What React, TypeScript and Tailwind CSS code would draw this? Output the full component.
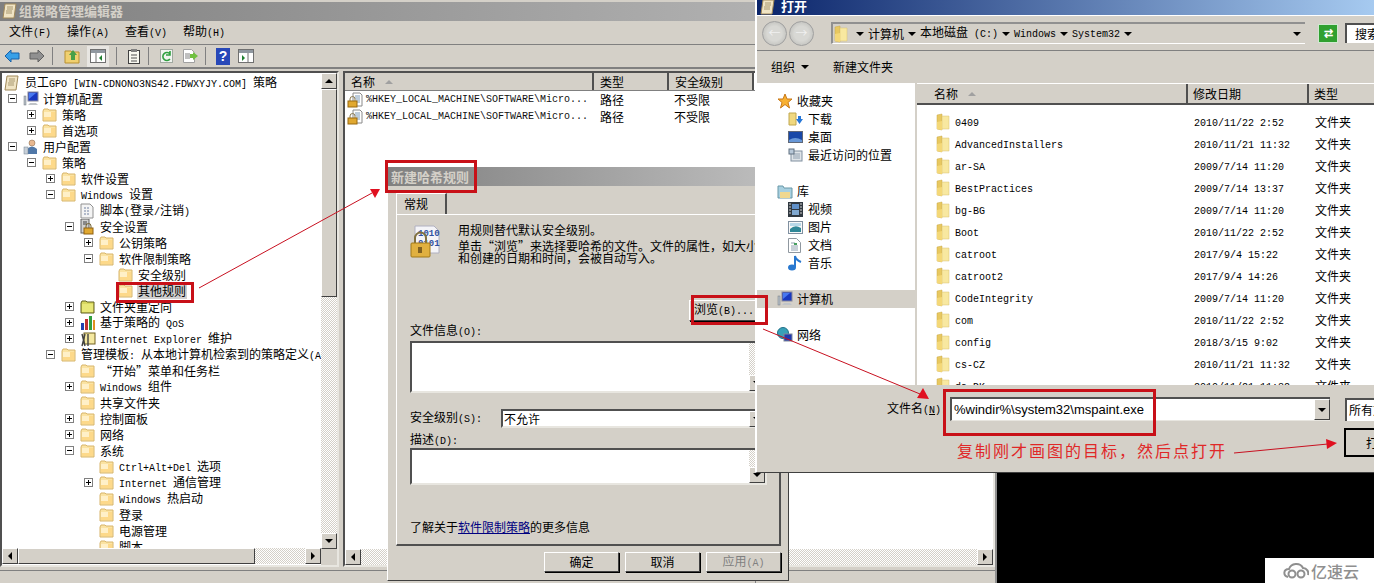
import type { ReactNode } from "react";

const RAISED = "border border-t-white border-l-white border-r-[#404040] border-b-[#404040] bg-[#d4d0c8]";
const SUNKEN = "border-2 border-t-[#505050] border-l-[#505050] border-r-[#e8e6e0] border-b-[#e8e6e0] bg-white";
const DITHER = "bg-[repeating-conic-gradient(#d4d0c8_0%_25%,#ffffff_0%_50%)] bg-[length:2px_2px]";

// SimSun look: ascii glyphs are 6px wide next to 12px hanzi
function Mixed({ text }: { text: string }) {
  const parts = text.split(/([\x20-\x7e]+)/).filter(Boolean);
  return (
    <span className="whitespace-pre font-['Noto_Sans_CJK_SC',sans-serif] text-[12px] leading-4">
      {parts.map((p, i) =>
        /^[\x20-\x7e]+$/.test(p) ? (
          <span key={i} className="font-['Liberation_Mono',monospace] text-[10px]">{p}</span>
        ) : (
          <span key={i}>{p}</span>
        ),
      )}
    </span>
  );
}

function FolderIcon({ className = "w-[15px] h-[14px]" }: { className?: string }) {
  return (
    <svg viewBox="0 0 15 14" className={`${className} shrink-0`}>
      <path d="M1 3 L1 13 L14 13 L14 2 L7 2 L6 1 L2 1 Z" fill="#fbe3a2" stroke="#d8b56a" />
      <path d="M2 4 L13 4 L13 12 L2 12 Z" fill="#fdd98a" />
      <path d="M2 4 L9 4 L9 9 L2 9 Z" fill="#fff0c8" />
    </svg>
  );
}

function OpenFolder() {
  return (
    <svg viewBox="0 0 14 18" className="h-[18px] w-[14px] shrink-0">
      <path d="M1 2 L6 1 L6 17 L1 16 Z" fill="#e8c860" stroke="#c8a848" strokeWidth="0.5" />
      <path d="M6 3 L13 3 L13 16 L6 16 Z" fill="#f8e8a0" stroke="#d8c070" strokeWidth="0.5" />
      <path d="M1 9 L6 8 L6 17 L1 16 Z" fill="#f4d878" />
    </svg>
  );
}

function Expander({ open }: { open: boolean }) {
  return (
    <span className="relative flex h-[9px] w-[9px] shrink-0 items-center justify-center border border-[#808080] bg-white">
      <span className="absolute h-px w-[5px] bg-black" />
      {!open && <span className="absolute h-[5px] w-px bg-black" />}
    </span>
  );
}

function LockDoc() {
  return (
    <svg viewBox="0 0 16 16" className="h-4 w-4 shrink-0">
      <path d="M6 1 L13 1 L15 3 L15 14 L6 14 Z" fill="#fff" stroke="#8a8a8a" />
      <path d="M8 4h5M8 6h5M9 8h4M10 10h3" stroke="#7a9ab8" />
      <path d="M3 9 V7 a2.5 2.5 0 0 1 5 0 V9" fill="none" stroke="#8a7a50" />
      <rect x="1" y="9" width="9" height="6" fill="#e0a830" stroke="#9a6a10" />
    </svg>
  );
}

function ComputerIcon() {
  return (
    <svg viewBox="0 0 16 16" className="h-4 w-4 shrink-0">
      <rect x="1" y="5" width="2" height="9" fill="#b8c0c8" stroke="#707880" strokeWidth="0.5" />
      <rect x="5" y="1" width="10" height="9" fill="#1838c0" stroke="#889" />
      <path d="M6 2 L13 2 L6 8 Z" fill="#4878f0" />
      <path d="M7 12 L13 12 L15 14 L5 14 Z" fill="#c0c4c8" />
    </svg>
  );
}

function UserIcon() {
  return (
    <svg viewBox="0 0 16 16" className="h-4 w-4 shrink-0">
      <circle cx="9" cy="4" r="3" fill="#e8b890" stroke="#806040" strokeWidth="0.5" />
      <path d="M4 15 L4 10 Q9 5 14 10 L14 15 Z" fill="#5078a8" />
      <rect x="1" y="8" width="4" height="7" fill="#c8d0d8" stroke="#708090" strokeWidth="0.5" />
    </svg>
  );
}

function ScriptIcon() {
  return (
    <svg viewBox="0 0 14 16" className="h-4 w-[14px] shrink-0">
      <path d="M1 1 L10 1 L13 4 L13 15 L1 15 Z" fill="#f4f4f4" stroke="#909090" />
      <path d="M4 5h6M4 8h6M4 11h6" stroke="#7080a0" strokeDasharray="2 1" />
    </svg>
  );
}

function SecurityIcon() {
  return (
    <svg viewBox="0 0 14 16" className="h-4 w-[14px] shrink-0">
      <rect x="1" y="0" width="8" height="14" fill="#d0d0d0" stroke="#606060" />
      <path d="M3 3h4M3 5h4" stroke="#404040" />
      <rect x="4" y="9" width="9" height="6" fill="#e0a830" stroke="#906010" />
      <path d="M6 9 V7 a2.5 2.5 0 0 1 5 0 V9" fill="none" stroke="#706030" />
    </svg>
  );
}

function RedirectIcon() {
  return (
    <svg viewBox="0 0 15 14" className="h-[14px] w-[15px] shrink-0">
      <path d="M1 3 L1 13 L14 13 L14 2 L7 2 L6 1 L2 1 Z" fill="#d8d860" stroke="#606020" />
      <path d="M2 4h11v8H2z" fill="#e8e878" />
    </svg>
  );
}

function QosIcon() {
  return (
    <svg viewBox="0 0 16 16" className="h-4 w-4 shrink-0">
      <rect x="1" y="8" width="3" height="7" fill="#2040b0" />
      <rect x="5" y="4" width="3" height="11" fill="#c03030" />
      <rect x="9" y="1" width="3" height="14" fill="#30a040" />
      <rect x="13" y="5" width="2" height="10" fill="#e09020" />
    </svg>
  );
}

function IeIcon() {
  return (
    <svg viewBox="0 0 16 16" className="h-4 w-4 shrink-0">
      <rect x="4" y="2" width="11" height="11" fill="#f4e8a0" stroke="#706020" />
      <path d="M2 3 L5 15 M5 3 L2 15 M8 3 V15" stroke="#404040" strokeWidth="1.4" />
    </svg>
  );
}

function GpoIcon() {
  return (
    <svg viewBox="0 0 15 17" className="h-[17px] w-[15px] shrink-0">
      <path d="M3 1 L14 1 L12 15 L1 15 Z" fill="#f0e4c4" stroke="#a08858" />
      <path d="M5 4h6M5 6h6M4 8h6M4 10h6" stroke="#a89870" />
    </svg>
  );
}

type TreeRow = { label: string; pad: number; exp?: "open" | "closed"; icon?: ReactNode; selected?: boolean };

// pad is the x of the icon inside the pane; the expander sits 15px in front of it
const TREE: TreeRow[] = [
  { label: "计算机配置", pad: 21, exp: "open", icon: <ComputerIcon /> },
  { label: "策略", pad: 40, exp: "closed" },
  { label: "首选项", pad: 40, exp: "closed" },
  { label: "用户配置", pad: 21, exp: "open", icon: <UserIcon /> },
  { label: "策略", pad: 40, exp: "open" },
  { label: "软件设置", pad: 59, exp: "closed" },
  { label: "Windows 设置", pad: 59, exp: "open" },
  { label: "脚本(登录/注销)", pad: 78, icon: <ScriptIcon /> },
  { label: "安全设置", pad: 78, exp: "open", icon: <SecurityIcon /> },
  { label: "公钥策略", pad: 97, exp: "closed" },
  { label: "软件限制策略", pad: 97, exp: "open" },
  { label: "安全级别", pad: 116 },
  { label: "其他规则", pad: 116, selected: true },
  { label: "文件夹重定向", pad: 78, exp: "closed", icon: <RedirectIcon /> },
  { label: "基于策略的 QoS", pad: 78, exp: "closed", icon: <QosIcon /> },
  { label: "Internet Explorer 维护", pad: 78, exp: "closed", icon: <IeIcon /> },
  { label: "管理模板: 从本地计算机检索到的策略定义(A", pad: 59, exp: "open" },
  { label: "“开始”菜单和任务栏", pad: 78 },
  { label: "Windows 组件", pad: 78, exp: "closed" },
  { label: "共享文件夹", pad: 78 },
  { label: "控制面板", pad: 78, exp: "closed" },
  { label: "网络", pad: 78, exp: "closed" },
  { label: "系统", pad: 78, exp: "open" },
  { label: "Ctrl+Alt+Del 选项", pad: 97 },
  { label: "Internet 通信管理", pad: 97, exp: "closed" },
  { label: "Windows 热启动", pad: 97 },
  { label: "登录", pad: 97 },
  { label: "电源管理", pad: 97 },
  { label: "脚本", pad: 97 },
];

function Tree() {
  return (
    <div className="h-[475px] overflow-hidden pt-[2px]">
      <div className="flex h-4 items-center gap-[6px] pl-[2px] text-black">
        <GpoIcon />
        <Mixed text="员工GPO [WIN-CDNONO3NS42.FDWXYJY.COM] 策略" />
      </div>
      {TREE.map((row, i) => (
        <div key={i} className="relative flex h-4 items-center" style={{ paddingLeft: row.pad }}>
          {row.exp && (
            <span className="absolute top-[3px]" style={{ left: row.pad - 15 }}>
              <Expander open={row.exp === "open"} />
            </span>
          )}
          <span className="flex w-4 shrink-0 items-center">{row.icon ?? <FolderIcon />}</span>
          <span className={`ml-[3px] whitespace-nowrap px-px text-black ${row.selected ? "bg-[#d0d0d0]" : ""}`}>
            <Mixed text={row.label} />
          </span>
        </div>
      ))}
    </div>
  );
}

function Arrow({ dir }: { dir: "up" | "down" | "left" | "right" }) {
  const cls =
    dir === "up"
      ? "border-x-[4px] border-b-[4px] border-x-transparent border-b-black"
      : dir === "down"
        ? "border-x-[4px] border-t-[4px] border-x-transparent border-t-black"
        : dir === "left"
          ? "border-y-[4px] border-r-[4px] border-y-transparent border-r-black"
          : "border-y-[4px] border-l-[4px] border-y-transparent border-l-black";
  return <span className={`block h-0 w-0 ${cls}`} />;
}

function ScrollBtn({ dir }: { dir: "up" | "down" | "left" | "right" }) {
  return (
    <span className={`${RAISED} flex h-4 w-4 shrink-0 items-center justify-center`}>
      <Arrow dir={dir} />
    </span>
  );
}

function MenuBar() {
  return (
    <div className="flex h-[24px] items-center gap-[16px] border-b border-b-[#808080] pl-[9px]">
      {["文件(F)", "操作(A)", "查看(V)", "帮助(H)"].map((m) => (
        <Mixed key={m} text={m} />
      ))}
    </div>
  );
}

function ToolSep() {
  return <span className="mx-[3px] h-[18px] w-px bg-[#808080]" />;
}

function ToolBar() {
  return (
    <div className="flex h-[24px] items-center gap-[4px] border-b-2 border-b-[#808080] pl-1">
      <svg viewBox="0 0 16 14" className="h-[14px] w-4">
        <path d="M1 7 L7 1 V4 H15 V10 H7 V13 Z" fill="#38a0e8" stroke="#1860a8" />
      </svg>
      <svg viewBox="0 0 16 14" className="ml-[5px] h-[14px] w-4">
        <path d="M15 7 L9 1 V4 H1 V10 H9 V13 Z" fill="#909090" stroke="#606060" />
      </svg>
      <ToolSep />
      <svg viewBox="0 0 16 16" className="ml-1 h-4 w-4">
        <path d="M1 3h6l1 1h7v11H1z" fill="#f0d070" stroke="#b89030" />
        <path d="M7 12 V7 H5 L9 2 L13 7 H11 V12 Z" fill="#48a048" />
      </svg>
      <span className="ml-[3px] flex h-[21px] w-[22px] items-center justify-center bg-[#e8e6e2]">
        <svg viewBox="0 0 16 14" className="h-[14px] w-4">
          <rect x="0.5" y="0.5" width="15" height="13" fill="#fff" stroke="#707070" />
          <rect x="1" y="1" width="14" height="3" fill="#9098a0" />
          <path d="M6 4v10" stroke="#707070" />
          <path d="M12 6 L9 9 L12 12 Z" fill="#208030" />
        </svg>
      </span>
      <ToolSep />
      <svg viewBox="0 0 14 16" className="ml-[3px] h-4 w-[14px]">
        <rect x="1.5" y="2.5" width="11" height="13" fill="#f8f8f0" stroke="#404040" />
        <rect x="4" y="1" width="6" height="3" fill="#808080" />
        <path d="M4 7h6M4 10h6M4 13h6" stroke="#505050" />
      </svg>
      <ToolSep />
      <svg viewBox="0 0 16 16" className="ml-[3px] h-4 w-4">
        <rect x="1.5" y="1.5" width="12" height="13" fill="#f0f4f0" stroke="#a0a8a0" />
        <path d="M11 6 A4 4 0 1 0 11 11 M11 3 V7 H7" fill="none" stroke="#30a040" strokeWidth="1.6" />
      </svg>
      <svg viewBox="0 0 16 16" className="ml-[3px] h-4 w-4">
        <path d="M1.5 1.5h8l3 3v10h-11z" fill="#fff" stroke="#a0a0a0" />
        <path d="M3 6h5M3 8h5M3 10h5" stroke="#808080" />
        <path d="M8 6h3V4l5 4-5 4v-2H8z" fill="#70c040" />
      </svg>
      <ToolSep />
      <span className="ml-[3px] flex h-[17px] w-[14px] items-center justify-center bg-[#2848b8] font-['Liberation_Sans',sans-serif] text-[14px] font-bold text-white">?</span>
      <svg viewBox="0 0 16 14" className="ml-[4px] h-[14px] w-4">
        <rect x="0.5" y="0.5" width="15" height="13" fill="#fff" stroke="#707070" />
        <rect x="1" y="1" width="14" height="3" fill="#9098a0" />
        <path d="M10 4v10" stroke="#707070" />
        <path d="M4 6 L7 9 L4 12 Z" fill="#208030" />
      </svg>
    </div>
  );
}

function TreePane() {
  return (
    <div className="flex h-[496px] w-[339px] shrink-0 border-2 border-t-[#505050] border-l-[#505050] border-r-[#e8e6e0] border-b-[#e8e6e0] bg-white">
      <div className="flex min-w-0 flex-1 flex-col">
        <Tree />
        <div className="flex h-4 bg-[#d4d0c8]">
          <ScrollBtn dir="left" />
          <span className={`${RAISED} w-[237px]`} />
          <span className={`flex-1 ${DITHER}`} />
          <ScrollBtn dir="right" />
        </div>
      </div>
      <div className="flex w-4 shrink-0 flex-col">
        <ScrollBtn dir="up" />
        <span className={`${RAISED} h-[208px] w-4`} />
        <span className={`flex-1 ${DITHER}`} />
        <ScrollBtn dir="down" />
        <span className="h-4 bg-[#d4d0c8]" />
      </div>
    </div>
  );
}

function ColumnHead({ label, className, sorted }: { label: string; className: string; sorted?: boolean }) {
  return (
    <div className={`flex h-[17px] items-center gap-[10px] border-r-2 border-r-[#505050] bg-[#d4d0c8] pl-[6px] ${className}`}>
      <Mixed text={label} />
      {sorted && <span className="block h-0 w-0 border-x-[4px] border-b-[4px] border-x-transparent border-b-[#a0a0a0]" />}
    </div>
  );
}

function RulesPane() {
  return (
    <div className="flex h-[496px] flex-1 flex-col border-2 border-t-[#505050] border-l-[#505050] border-r-[#e8e6e0] border-b-[#e8e6e0] bg-white">
      <div className="flex border-b border-b-[#808080]">
        <ColumnHead label="名称" className="w-[249px]" sorted />
        <ColumnHead label="类型" className="w-[75px]" />
        <ColumnHead label="安全级别" className="w-[85px]" />
      </div>
      <div className="flex-1 overflow-hidden">
        {[0, 1].map((i) => (
          <div key={i} className="flex h-[17px] items-center">
            <span className="ml-[2px] flex w-[19px]"><LockDoc /></span>
            <span className="w-[234px] font-['Liberation_Mono',monospace] text-[10px] text-[#101010]">
              %HKEY_LOCAL_MACHINE\SOFTWARE\Micro...
            </span>
            <span className="w-[74px]"><Mixed text="路径" /></span>
            <Mixed text="不受限" />
          </div>
        ))}
      </div>
      <div className="flex h-4 bg-[#d4d0c8]">
        <ScrollBtn dir="left" />
        <span className={`flex-1 ${DITHER}`} />
        <ScrollBtn dir="right" />
      </div>
    </div>
  );
}

function MainWindow() {
  return (
    <div className="absolute left-0 top-0 flex h-[583px] w-[997px] flex-col border-r-2 border-r-[#909090] bg-[#d4d0c8] pt-[2px]">
      <div className="flex h-[19px] items-center gap-[2px] bg-[linear-gradient(90deg,#808080,#c0c0c0)] pl-[2px]">
        <GpoIcon />
        <span className="-mt-[2px] font-['Noto_Sans_CJK_SC',sans-serif] text-[13px] font-bold text-[#d4d0c8]">组策略管理编辑器</span>
      </div>
      <MenuBar />
      <ToolBar />
      <div className="mt-[2px] flex flex-1 gap-1">
        <TreePane />
        <RulesPane />
      </div>
      <div className="flex h-[13px] items-stretch justify-end border-t border-t-[#808080]">
        <span className="w-[240px] border-l border-l-[#808080]" />
      </div>
    </div>
  );
}

function Btn({ children, className = "" }: { children: ReactNode; className?: string }) {
  return (
    <span className={`${RAISED} flex items-center justify-center shadow-[1px_1px_0_#000] ${className}`}>
      {children}
    </span>
  );
}

function MiniScroll({ className = "" }: { className?: string }) {
  return (
    <span className={`absolute right-0 flex w-[16px] flex-col bg-[#d4d0c8] ${className}`}>
      <span className={`flex-1 ${DITHER}`} />
      <ScrollBtn dir="down" />
    </span>
  );
}

function HashDialog() {
  return (
    <div className="absolute left-[387px] top-[165px] flex h-[416px] w-[402px] flex-col border-t-2 border-t-white border-r border-r-[#404040] border-b border-b-[#404040] border-l border-l-white bg-[#d4d0c8]">
      <div className="flex h-[19px] items-center bg-[linear-gradient(90deg,#808080,#c0c0c0)] pl-[3px]">
        <span className="font-['Noto_Sans_CJK_SC',sans-serif] text-[13px] font-bold leading-4 text-[#d4d0c8]">新建哈希规则</span>
      </div>
      {/* tab strip */}
      <div className="mx-2 mt-2 flex h-[21px] items-end border-b border-b-white">
        <span className="flex h-[21px] w-[51px] items-center border-t border-l border-r-2 border-t-white border-l-white border-r-[#505050] pl-[7px]">
          <Mixed text="常规" />
        </span>
      </div>
      <div className="mx-2 relative flex h-[331px] w-[385px] flex-col border-l border-l-white border-r-2 border-r-[#505050] border-b-2 border-b-[#505050] pl-[13px]">
        <div className="flex pt-[7px]">
          <svg viewBox="0 0 30 34" className="mt-[3px] h-[34px] w-[30px] shrink-0">
            <path d="M5 1 L24 1 L29 6 L29 28 L5 28 Z" fill="#f4f4f8" stroke="#b0b0c0" />
            <text x="8" y="11" fontFamily="Liberation Mono" fontSize="9" fontWeight="bold" fill="#3050a0">1010</text>
            <text x="8" y="21" fontFamily="Liberation Mono" fontSize="9" fontWeight="bold" fill="#3050a0">0101</text>
            <path d="M5 18 V13 a5.5 5.5 0 0 1 11 0 V18" fill="none" stroke="#807040" strokeWidth="2" />
            <rect x="1" y="18" width="19" height="14" rx="1" fill="#e0b040" stroke="#a07818" />
            <rect x="8" y="22" width="4" height="6" fill="#806020" />
          </svg>
          <div className="ml-[18px] flex flex-col whitespace-nowrap">
            <span className="h-4"><Mixed text="用规则替代默认安全级别。" /></span>
            <span className="h-[12px]"><Mixed text="单击“浏览”来选择要哈希的文件。文件的属性，如大小" /></span>
            <span className="h-[12px]"><Mixed text="和创建的日期和时间，会被自动写入。" /></span>
          </div>
        </div>
        <div className="mt-[38px] flex justify-end pr-[20px]">
          <Btn className="h-[21px] w-[70px]"><Mixed text="浏览(B)..." /></Btn>
        </div>
        <div className="mt-[1px] h-4"><Mixed text="文件信息(O):" /></div>
        <div className={`${SUNKEN} relative mt-[3px] h-[52px] w-[357px]`}>
          <MiniScroll className="top-0 h-full" />
        </div>
        <div className="mt-[16px] flex h-[19px] items-start">
          <span className="w-[91px]"><Mixed text="安全级别(S):" /></span>
          <span className={`${SUNKEN} relative flex h-[19px] w-[266px] items-center pl-[1px]`}>
            <Mixed text="不允许" />
            <MiniScroll className="top-0 h-full" />
          </span>
        </div>
        <div className="mt-[3px] h-4"><Mixed text="描述(D):" /></div>
        <div className={`${SUNKEN} relative mt-[1px] h-[37px] w-[357px]`}>
          <MiniScroll className="top-0 h-full" />
        </div>
        <div className="mt-[34px]">
          <Mixed text="了解关于" />
          <span className="text-[#000080] underline"><Mixed text="软件限制策略" /></span>
          <Mixed text="的更多信息" />
        </div>
      </div>
      <div className="mt-[6px] flex justify-end gap-[6px] pr-[7px]">
        <Btn className="h-5 w-[75px]"><Mixed text="确定" /></Btn>
        <Btn className="h-5 w-[75px]"><Mixed text="取消" /></Btn>
        <Btn className="h-5 w-[75px] text-[#808080]"><Mixed text="应用(A)" /></Btn>
      </div>
    </div>
  );
}

function NavItem({ icon, label, sub, active }: { icon: ReactNode; label: string; sub?: boolean; active?: boolean }) {
  return (
    <div className={`flex h-[18px] items-center ${active ? "bg-[#d4d0c8]" : ""} ${sub ? "pl-[31px]" : "pl-[20px]"}`}>
      <span className="flex w-[20px] shrink-0 items-center">{icon}</span>
      <span className="text-black"><Mixed text={label} /></span>
    </div>
  );
}

function NavPane() {
  return (
    <div className="flex w-[158px] shrink-0 flex-col bg-white pt-[9px]">
      <NavItem label="收藏夹" icon={
        <svg viewBox="0 0 16 16" className="h-4 w-4"><path d="M8 1 L10 6 L15 6 L11 9.5 L12.5 15 L8 11.5 L3.5 15 L5 9.5 L1 6 L6 6 Z" fill="#f8b030" stroke="#c87818" /></svg>
      } />
      <NavItem sub label="下载" icon={
        <svg viewBox="0 0 15 16" className="h-4 w-[15px]"><path d="M1 2h7v12H1z" fill="#f0d880" stroke="#c0a850" /><path d="M8 8h2V5h3v3h2l-3.5 5z" fill="#2878d8" /></svg>
      } />
      <NavItem sub label="桌面" icon={
        <svg viewBox="0 0 15 13" className="h-[13px] w-[15px]"><rect x="0.5" y="0.5" width="14" height="11" fill="#1848a8" stroke="#606878" /><path d="M1 9 Q7 5 14 9 V11 H1 Z" fill="#6898d8" /></svg>
      } />
      <NavItem sub label="最近访问的位置" icon={
        <svg viewBox="0 0 15 15" className="h-[15px] w-[15px]"><rect x="3" y="3" width="11" height="10" fill="#dfe4e8" stroke="#8090a0" /><path d="M5 6h7M5 8h7M5 10h7" stroke="#90a0b0" /><rect x="1" y="1" width="5" height="5" fill="#b8c8d8" stroke="#607080" /></svg>
      } />
      <div className="h-[18px]" />
      <NavItem label="库" icon={
        <svg viewBox="0 0 16 15" className="h-[15px] w-4"><path d="M1 2h5l1 2h8v10H1z" fill="#a8d0e0" stroke="#6898a8" /><path d="M3 8h10v6H3z" fill="#f0d890" /></svg>
      } />
      <NavItem sub label="视频" icon={
        <svg viewBox="0 0 15 15" className="h-[15px] w-[15px]"><rect width="15" height="15" fill="#303840" /><rect x="4" y="2" width="7" height="5" fill="#6090c8" /><rect x="4" y="8" width="7" height="5" fill="#80a8d0" /><path d="M1 2h2M1 5h2M1 8h2M1 11h2M12 2h2M12 5h2M12 8h2M12 11h2" stroke="#d0d0d0" /></svg>
      } />
      <NavItem sub label="图片" icon={
        <svg viewBox="0 0 15 13" className="h-[13px] w-[15px]"><rect x="0.5" y="0.5" width="14" height="12" fill="#f8f8f8" stroke="#8090a0" /><path d="M2 8 Q7 3 13 7 V11 H2 Z" fill="#308898" /><rect x="2" y="2" width="11" height="3" fill="#b8d8e8" /></svg>
      } />
      <NavItem sub label="文档" icon={
        <svg viewBox="0 0 13 15" className="h-[15px] w-[13px]"><path d="M0.5 0.5h8l4 4v10h-12z" fill="#fff" stroke="#9098a0" /><path d="M3 5h4M3 8h7M3 10h7M3 12h7" stroke="#90a0b0" /><rect x="6" y="5" width="3" height="2" fill="#48a060" /></svg>
      } />
      <NavItem sub label="音乐" icon={
        <svg viewBox="0 0 14 16" className="h-4 w-[14px]"><ellipse cx="4" cy="12.5" rx="4" ry="3" fill="#2878d0" /><path d="M7 12 V1 Q8 5 13 7" fill="none" stroke="#2878d0" strokeWidth="2" /></svg>
      } />
      <div className="h-[18px]" />
      <NavItem active label="计算机" icon={<ComputerIcon />} />
      <div className="h-[18px]" />
      <NavItem label="网络" icon={
        <svg viewBox="0 0 16 16" className="h-4 w-4"><circle cx="6" cy="6" r="5.5" fill="#38a0b8" stroke="#207088" /><rect x="7" y="7" width="8" height="7" fill="#2038b0" stroke="#808898" /></svg>
      } />
    </div>
  );
}

const FILES: [string, string][] = [
  ["0409", "2010/11/22 2:52"],
  ["AdvancedInstallers", "2010/11/21 11:32"],
  ["ar-SA", "2009/7/14 11:20"],
  ["BestPractices", "2009/7/14 13:37"],
  ["bg-BG", "2009/7/14 11:20"],
  ["Boot", "2010/11/22 2:52"],
  ["catroot", "2017/9/4 15:22"],
  ["catroot2", "2017/9/4 14:26"],
  ["CodeIntegrity", "2009/7/14 11:20"],
  ["com", "2010/11/22 2:52"],
  ["config", "2018/3/15 9:02"],
  ["cs-CZ", "2010/11/21 11:32"],
  ["da-DK", "2010/11/21 11:32"],
];

function FileList() {
  return (
    <div className="flex h-[302px] min-w-0 flex-1 flex-col overflow-hidden bg-white">
      <div className="flex h-[22px] shrink-0 items-center border-t border-t-white border-b-2 border-b-[#505050] bg-[#d4d0c8]">
        <span className="flex h-full w-[271px] items-center gap-[10px] border-r-2 border-r-[#505050] pl-[17px]">
          <Mixed text="名称" />
          <span className="block h-0 w-0 border-x-[4px] border-b-[4px] border-x-transparent border-b-[#a0a0a0]" />
        </span>
        <span className="flex h-full w-[121px] items-center border-r-2 border-r-[#505050] pl-[5px]">
          <Mixed text="修改日期" />
        </span>
        <span className="pl-[5px]"><Mixed text="类型" /></span>
      </div>
      <div className="pt-[6px]">
        {FILES.map(([name, date]) => (
          <div key={name} className="flex h-[22px] items-center">
            <span className="ml-[19px] flex w-[19px]"><OpenFolder /></span>
            <span className="w-[239px]"><Mixed text={name} /></span>
            <span className="w-[121px]"><Mixed text={date} /></span>
            <Mixed text="文件夹" />
          </div>
        ))}
      </div>
    </div>
  );
}

function NavCircle({ children }: { children: ReactNode }) {
  return (
    <span className="flex h-[25px] w-[25px] shrink-0 items-center justify-center rounded-full border border-[#a0a0a0] bg-[radial-gradient(circle,#d8d8d4_45%,#b4b4b0)] text-[#f0f0f0]">
      {children}
    </span>
  );
}

function OpenDialog() {
  return (
    <div className="absolute left-[755px] top-0 flex h-[473px] w-[619px] flex-col border-l-2 border-l-white border-b border-b-[#404040] bg-[#d4d0c8]">
      <div className="flex h-[15px] shrink-0 items-center gap-[6px] bg-[linear-gradient(90deg,#0a246a,#a6caf0)] pl-[3px]">
        <GpoIcon />
        <span className="-mt-[4px] font-['Noto_Sans_CJK_SC',sans-serif] text-[13px] font-bold leading-[15px] text-white">打开</span>
      </div>
      {/* address row */}
      <div className="flex h-[36px] shrink-0 items-center gap-[2px] border-y border-t-white border-b-[#808080] pl-[5px]">
        <NavCircle>←</NavCircle>
        <NavCircle>→</NavCircle>
        <span className="ml-[15px] flex h-[22px] w-[474px] shrink-0 items-center gap-[8px] border-t-2 border-t-[#909090] border-l-2 border-l-[#909090] border-b border-b-white pl-[1px]">
          <OpenFolder />
          <span className="flex items-center gap-[4px]">
            <Arrow dir="down" /><Mixed text="计算机" />
            <Arrow dir="down" /><Mixed text="本地磁盘 (C:)" />
            <Arrow dir="down" /><Mixed text="Windows" />
            <Arrow dir="down" /><Mixed text="System32" />
            <Arrow dir="down" />
          </span>
          <span className="ml-auto mr-1"><Arrow dir="down" /></span>
        </span>
        <span className="ml-[11px] flex h-[19px] w-[20px] shrink-0 items-center justify-center border border-[#d0e8d0] bg-[#30a030] font-['Liberation_Sans',sans-serif] text-[11px] font-bold text-white">⇄</span>
        <span className="ml-[5px] flex h-[20px] flex-1 items-center border-t-2 border-t-[#505050] border-l-2 border-l-[#505050] bg-white pl-[8px]">
          <Mixed text="搜索" />
        </span>
      </div>
      {/* command bar */}
      <div className="flex h-[32px] shrink-0 items-center pl-[14px]">
        <Mixed text="组织" />
        <span className="ml-[6px]"><Arrow dir="down" /></span>
        <span className="ml-[24px]"><Mixed text="新建文件夹" /></span>
      </div>
      <div className="flex h-[302px] shrink-0 gap-[2px]">
        <NavPane />
        <FileList />
      </div>
      {/* file name row */}
      <div className="flex flex-1 flex-col">
        <div className="mt-[12px] flex h-[24px] items-center">
          <span className="ml-[130px] w-[63px] shrink-0">
            <Mixed text="文件名(" /><span className="underline"><Mixed text="N" /></span><Mixed text="):" />
          </span>
          <span className="flex h-[24px] w-[380px] shrink-0 items-center justify-between border-t-2 border-l-2 border-t-[#505050] border-l-[#505050] border-b border-b-[#e8e6e0] bg-white pl-[2px]">
            <span className="font-['Liberation_Sans',sans-serif] text-[13px] text-black">%windir%\system32\mspaint.exe</span>
            <span className={`${RAISED} flex h-full w-[16px] items-center justify-center`}><Arrow dir="down" /></span>
          </span>
          <span className="ml-[15px] flex h-[23px] min-w-0 flex-1 items-center overflow-hidden border-t-2 border-l-2 border-t-[#505050] border-l-[#505050] bg-white pl-[2px]">
            <Mixed text="所有文件" />
          </span>
        </div>
        <div className="mt-[7px] flex justify-end">
          <span className="flex h-[29px] w-[30px] items-center border-2 border-black border-r-0 bg-[#d4d0c8] pl-[20px]">
            <Mixed text="打开" />
          </span>
        </div>
      </div>
    </div>
  );
}

function Annotations() {
  return (
    <>
      <svg className="pointer-events-none absolute inset-0 h-[583px] w-[1374px]" viewBox="0 0 1374 583">
        <g stroke="#c81020" strokeWidth="1" fill="none">
          <path d="M199 288 L372 193" />
          <path d="M763 329 L920 394" />
          <path d="M1234 453 L1328 444" />
        </g>
        <g fill="#e01020">
          <path d="M380 189 L370 189 L375 198 Z" />
          <path d="M929 399 L917 398 L923 388 Z" />
          <path d="M1337 443 L1326 439 L1327 449 Z" />
        </g>
      </svg>
      <div className="absolute left-[116px] top-[282px] h-[21px] w-[78px] border-[3px] border-[#c81018]" />
      <div className="absolute left-[385px] top-[160px] h-[33px] w-[92px] border-[3px] border-[#c81018]" />
      <div className="absolute left-[691px] top-[295px] h-[30px] w-[77px] border-[3px] border-[#c81018]" />
      <div className="absolute left-[943px] top-[389px] h-[47px] w-[213px] border-[3px] border-[#c81018]" />
      <div className="absolute left-[957px] top-[438px] whitespace-nowrap font-['Noto_Sans_CJK_SC',sans-serif] text-[16px] leading-[24px] tracking-[2px] text-[#e02828]">
        复制刚才画图的目标，然后点打开
      </div>
    </>
  );
}

function Watermark() {
  return (
    <div className="absolute bottom-0 right-0 flex h-[25px] w-[109px] items-center gap-[2px] bg-white pl-[18px]">
      <svg viewBox="0 0 26 18" className="h-[18px] w-[26px]">
        <path d="M5 15 C0 14 0 7 6 7 C8 1 17 0 20 6 C24 6 26 10 25 13" fill="none" stroke="#8f8f8f" strokeWidth="2" />
        <circle cx="9" cy="12" r="3.5" fill="none" stroke="#8f8f8f" strokeWidth="2" />
        <circle cx="18" cy="12" r="3.5" fill="none" stroke="#8f8f8f" strokeWidth="2" />
      </svg>
      <span className="font-['Noto_Sans_CJK_SC',sans-serif] text-[16px] font-medium leading-5 text-[#8f8f8f]">亿速云</span>
    </div>
  );
}

export default function App() {
  return (
    <div className="relative h-[583px] w-[1374px] overflow-hidden bg-black font-['Noto_Sans_CJK_SC',sans-serif] text-[12px] leading-4 text-black">
      <MainWindow />
      <HashDialog />
      <OpenDialog />
      <Watermark />
      <Annotations />
    </div>
  );
}
